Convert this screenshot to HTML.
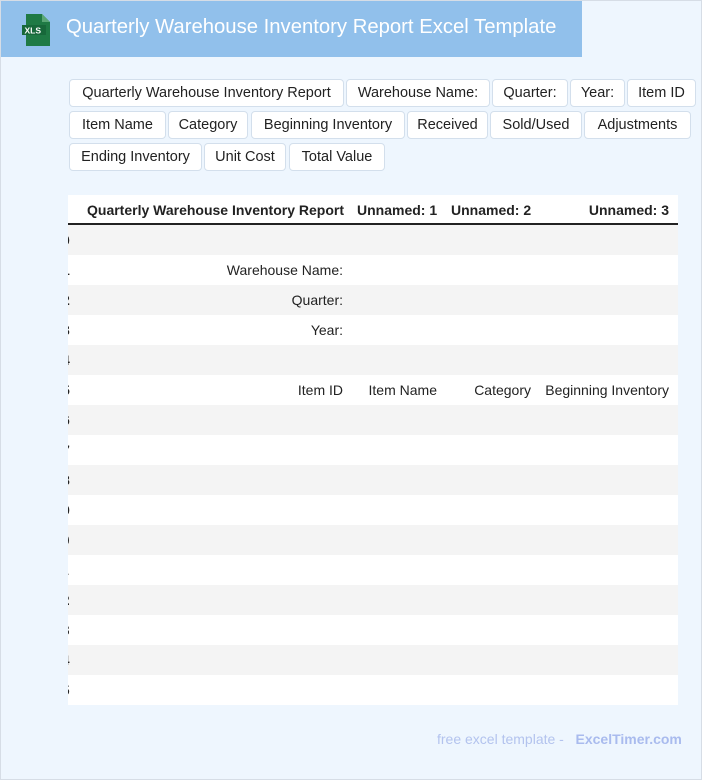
<!DOCTYPE html>
<html><head><meta charset="utf-8"><style>
*{margin:0;padding:0;box-sizing:border-box}
body{width:702px;height:780px;background:#eef6fe;font-family:"Liberation Sans",sans-serif;position:relative;overflow:hidden}
.frame{position:absolute;left:0;top:0;width:702px;height:780px;border:1px solid #d6dde6;pointer-events:none}
.hdr{position:absolute;left:0;top:0;width:582px;height:57px;background:#91c0eb}
.hdr h1{position:absolute;left:66px;top:16px;font-size:20.3px;font-weight:normal;color:#fff;white-space:nowrap}
.b{position:absolute;height:28px;background:#fff;border:1px solid #d3dfec;border-radius:4px;font-size:14.5px;color:#222;text-align:center;line-height:26px;white-space:nowrap}
.tbl{position:absolute;left:68px;top:195px;width:610px;height:510px;overflow:hidden;font-size:14px;color:#222}
.row{position:absolute;left:0;width:610px;height:30px}
.row span{position:absolute;top:7px;white-space:nowrap}
.ft{position:absolute;top:731px;left:437px;font-size:14px;color:#b3c3ee}
</style></head><body>
<div class="hdr">
<svg style="position:absolute;left:22px;top:14px" width="29" height="32" viewBox="0 0 29 32"><path d="M4 0H20L28 8V32H4Z" fill="#1f7a45"/><path d="M20 0V8H28Z" fill="#5aa776"/><rect x="0" y="11" width="24" height="10" fill="#17683a"/><text x="2.5" y="19.5" font-size="8.5" font-weight="bold" fill="#fff" font-family="Liberation Sans">XLS</text></svg>
<h1>Quarterly Warehouse Inventory Report Excel Template</h1></div>
<div class="b" style="left:69px;top:79px;width:275px">Quarterly Warehouse Inventory Report</div>
<div class="b" style="left:346px;top:79px;width:144px">Warehouse Name:</div>
<div class="b" style="left:492px;top:79px;width:76px">Quarter:</div>
<div class="b" style="left:570px;top:79px;width:55px">Year:</div>
<div class="b" style="left:627px;top:79px;width:69px">Item ID</div>
<div class="b" style="left:69px;top:111px;width:97px">Item Name</div>
<div class="b" style="left:168px;top:111px;width:80px">Category</div>
<div class="b" style="left:251px;top:111px;width:154px">Beginning Inventory</div>
<div class="b" style="left:407px;top:111px;width:81px">Received</div>
<div class="b" style="left:490px;top:111px;width:92px">Sold/Used</div>
<div class="b" style="left:584px;top:111px;width:107px">Adjustments</div>
<div class="b" style="left:69px;top:143px;width:133px">Ending Inventory</div>
<div class="b" style="left:204px;top:143px;width:82px">Unit Cost</div>
<div class="b" style="left:289px;top:143px;width:96px">Total Value</div>
<div class="tbl">
<div class="row" style="top:0;background:#fff;border-bottom:2px solid #222;font-weight:bold">
<span style="left:19px">Quarterly Warehouse Inventory Report</span><span style="left:289px">Unnamed: 1</span><span style="left:383px">Unnamed: 2</span><span style="right:9px">Unnamed: 3</span></div>
<div class="row" style="top:30px;background:#f4f4f4"><span style="left:-6px;font-weight:bold">0</span></div>
<div class="row" style="top:60px;background:#fff"><span style="left:-6px;font-weight:bold">1</span><span style="right:335px">Warehouse Name:</span></div>
<div class="row" style="top:90px;background:#f4f4f4"><span style="left:-6px;font-weight:bold">2</span><span style="right:335px">Quarter:</span></div>
<div class="row" style="top:120px;background:#fff"><span style="left:-6px;font-weight:bold">3</span><span style="right:335px">Year:</span></div>
<div class="row" style="top:150px;background:#f4f4f4"><span style="left:-6px;font-weight:bold">4</span></div>
<div class="row" style="top:180px;background:#fff"><span style="left:-6px;font-weight:bold">5</span><span style="right:335px">Item ID</span><span style="right:241px">Item Name</span><span style="right:147px">Category</span><span style="right:9px">Beginning Inventory</span></div>
<div class="row" style="top:210px;background:#f4f4f4"><span style="left:-6px;font-weight:bold">6</span></div>
<div class="row" style="top:240px;background:#fff"><span style="left:-6px;font-weight:bold">7</span></div>
<div class="row" style="top:270px;background:#f4f4f4"><span style="left:-6px;font-weight:bold">8</span></div>
<div class="row" style="top:300px;background:#fff"><span style="left:-6px;font-weight:bold">9</span></div>
<div class="row" style="top:330px;background:#f4f4f4"><span style="left:-14px;font-weight:bold">10</span></div>
<div class="row" style="top:360px;background:#fff"><span style="left:-14px;font-weight:bold">11</span></div>
<div class="row" style="top:390px;background:#f4f4f4"><span style="left:-14px;font-weight:bold">12</span></div>
<div class="row" style="top:420px;background:#fff"><span style="left:-14px;font-weight:bold">13</span></div>
<div class="row" style="top:450px;background:#f4f4f4"><span style="left:-14px;font-weight:bold">14</span></div>
<div class="row" style="top:480px;background:#fff"><span style="left:-14px;font-weight:bold">15</span></div>
</div>
<div class="ft">free excel template - &nbsp;&nbsp;<b style="color:#a9bbee">ExcelTimer.com</b></div>
<div class="frame"></div>
</body></html>
